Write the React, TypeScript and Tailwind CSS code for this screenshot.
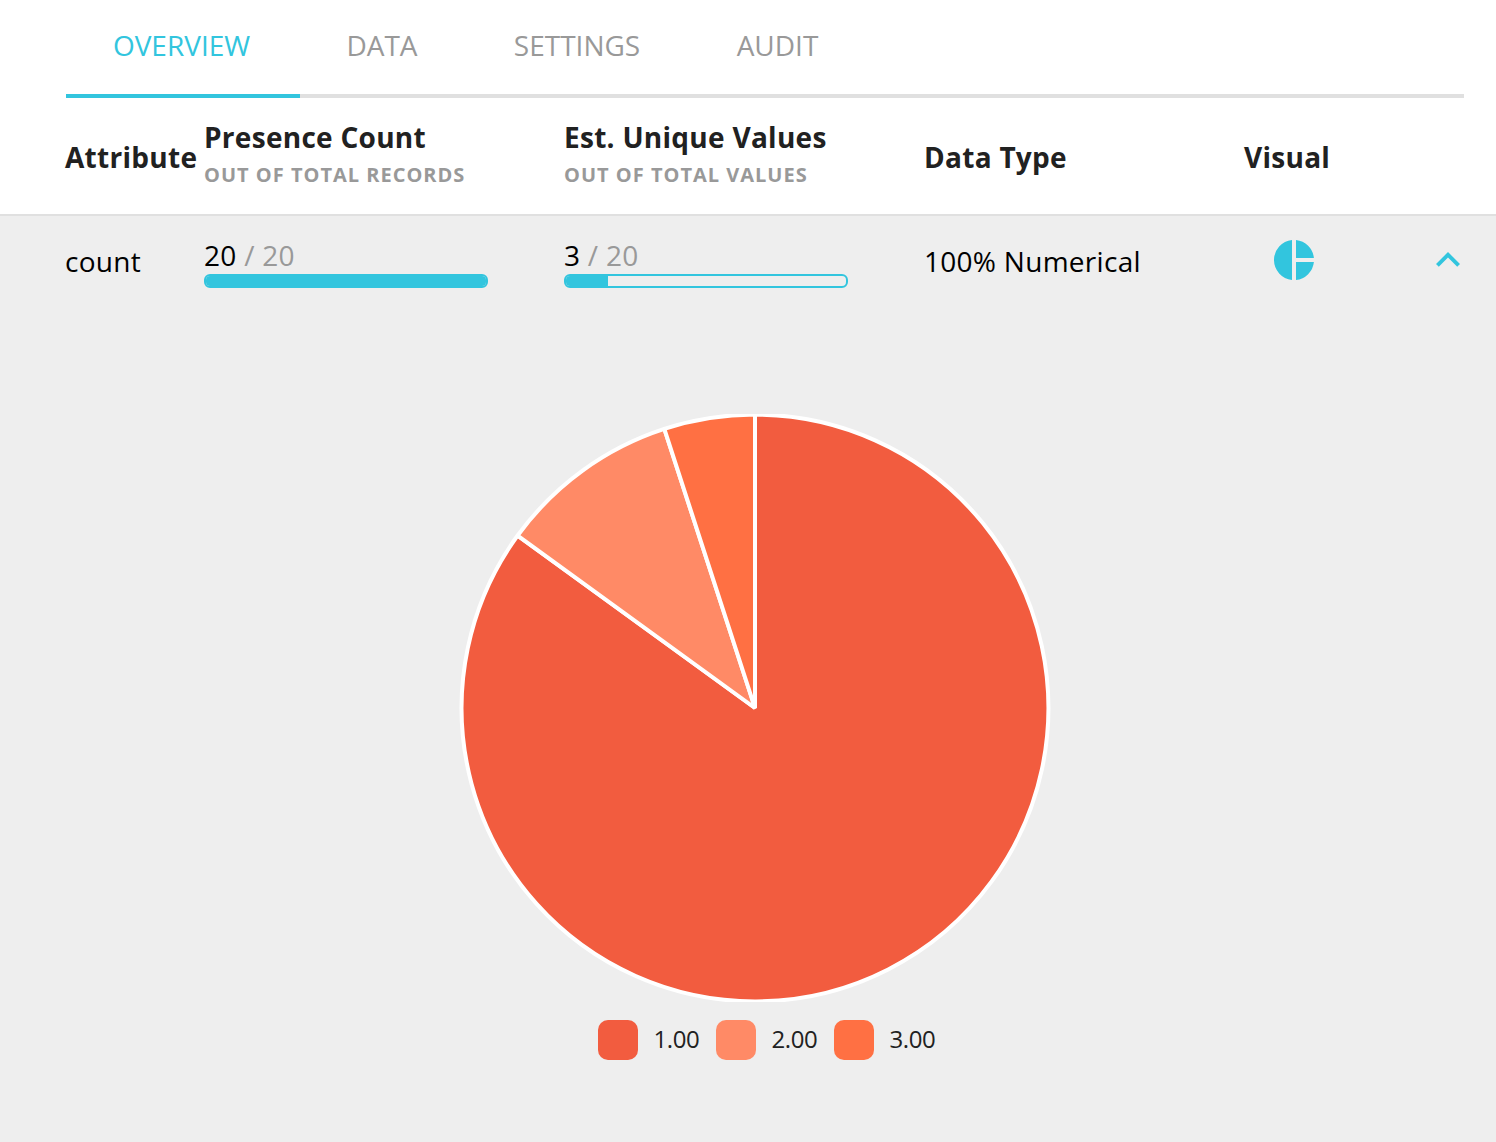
const CYAN = '#32c5de';

const slices = [
  { label: '1.00', value: 17, fill: '#f25c3f', swatch: 'bg-[#f25c3f]' },
  { label: '2.00', value: 2, fill: '#ff8a66', swatch: 'bg-[#ff8a66]' },
  { label: '3.00', value: 1, fill: '#ff7043', swatch: 'bg-[#ff7043]' },
];

const TOTAL = 20;
const CX = 296;
const CY = 294;
const R = 293.4;

function point(value: number) {
  const a = (value / TOTAL) * Math.PI * 2;
  return `${(CX + R * Math.sin(a)).toFixed(2)} ${(CY - R * Math.cos(a)).toFixed(2)}`;
}

function PieChart() {
  let start = 0;
  return (
    <svg width="592" height="588" viewBox="0 0 592 588" className="block">
      {slices.map((s) => {
        const from = start;
        start += s.value;
        const large = s.value > TOTAL / 2 ? 1 : 0;
        return (
          <path
            key={s.label}
            d={`M${CX} ${CY}L${point(from)}A${R} ${R} 0 ${large} 1 ${point(start)}Z`}
            fill={s.fill}
            stroke="#fff"
            strokeWidth="4"
            strokeLinejoin="bevel"
          />
        );
      })}
    </svg>
  );
}

function Meter({ value, total }: { value: number; total: number }) {
  return (
    <div className="w-[284px]">
      <div className="mb-[2px] h-[34px] text-[28px] leading-[34px] tracking-[0.28px] whitespace-pre text-[#999]">
        <span className="text-black">{value}</span> / {total}
      </div>
      <div className="h-[14px] overflow-hidden rounded-[6px] border-2 border-[#32c5de]">
        <div className="h-full bg-[#32c5de]" style={{ width: `${(value / total) * 100}%` }} />
      </div>
    </div>
  );
}

function Heading({ title, sub }: { title: string; sub?: string }) {
  return (
    <div className="font-bold whitespace-nowrap text-[#212121]">
      <div className="text-[28px] leading-[38px] tracking-[0.28px]">{title}</div>
      {sub && <div className="mt-1 mb-1 text-[20px] leading-[30px] tracking-[1px] text-[#999]">{sub}</div>}
    </div>
  );
}

const columns = 'grid grid-cols-[139px_360px_360px_320px_192px_60px] pl-[65px]';

export default function App() {
  return (
    <div className="flex h-[1142px] w-[1496px] flex-col overflow-hidden bg-white font-['Open_Sans',sans-serif]">
      <nav className="mr-8 ml-[66px] flex h-[98px] border-b-4 border-[#e0e0e0] text-[28px] leading-[38px] whitespace-nowrap text-[#999]">
        <div className="h-[98px] w-[234px] border-b-4 border-[#32c5de] pt-[26px] pr-[3px] text-center text-[#32c5de]">OVERVIEW</div>
        <div className="w-[165px] pt-[26px] pr-px text-center">DATA</div>
        <div className="w-[224px] pt-[26px] text-center">SETTINGS</div>
        <div className="w-[177px] pt-[26px] text-center">AUDIT</div>
      </nav>

      <div className={`${columns} h-[118px] items-center border-b-2 border-[#e0e0e0]`}>
        <div className="pt-[2px]"><Heading title="Attribute" /></div>
        <Heading title="Presence Count" sub="OUT OF TOTAL RECORDS" />
        <Heading title="Est. Unique Values" sub="OUT OF TOTAL VALUES" />
        <div className="pt-[2px]"><Heading title="Data Type" /></div>
        <div className="pt-[2px]"><Heading title="Visual" /></div>
      </div>

      <div className="flex-1 bg-[#eee]">
        <div className={`${columns} h-[94px] items-center text-[28px] leading-[38px] tracking-[0.28px]`}>
          <div className="pb-[4px]">count</div>
          <Meter value={20} total={20} />
          <Meter value={3} total={20} />
          <div className="pb-[4px]">100% Numerical</div>
          <svg width="40" height="40" viewBox="0 0 40 40" fill={CYAN} className="-mt-1.5 ml-[30px]">
            <path d="M18 0.1v39.8A20 20 0 0 1 18 0.1zM22 0.1A20 20 0 0 1 39.9 18H22zM22 22h17.9A20 20 0 0 1 22 39.9z" />
          </svg>
          <svg width="24" height="15" viewBox="0 0 24 15" fill={CYAN} className="-mt-[7px]">
            <path d="M12 0L0 12l2.8 2.8L12 5.6l9.2 9.2L24 12z" />
          </svg>
        </div>

        <div className="ml-[459px] pt-[104px]">
          <PieChart />
        </div>
        <div className="mt-[18px] ml-[598px] flex">
          {slices.map((s) => (
            <div key={s.label} className="flex h-10 w-[118px] items-center">
              <div className={`size-10 rounded-[10px] ${s.swatch}`} />
              <div className="ml-[15.4px] pb-[2px] text-[24px] leading-[38px] tracking-[-0.35px] text-[#212121]">{s.label}</div>
            </div>
          ))}
        </div>
      </div>
    </div>
  );
}
